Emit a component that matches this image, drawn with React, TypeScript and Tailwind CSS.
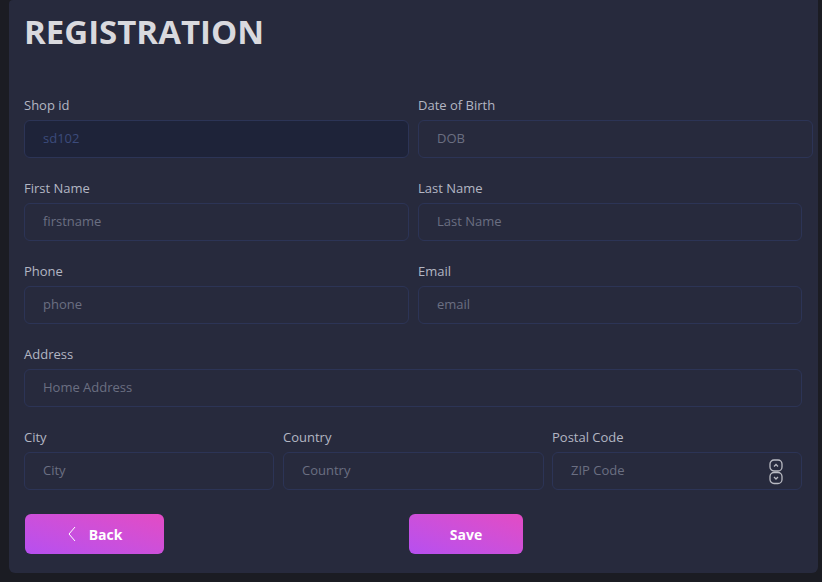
import React from "react";

const font = { fontFamily: '"Open Sans", "Liberation Sans", sans-serif' };

function Field({
  label,
  placeholder,
  width,
  value,
  muted,
  spinner,
}: {
  label: string;
  placeholder: string;
  width: string;
  value?: string;
  muted?: boolean;
  spinner?: boolean;
}) {
  return (
    <div className={`flex flex-col shrink-0 ${width}`}>
      <label className="text-[13px] leading-5 text-[#b3b6c3] mb-[5px]">{label}</label>
      <div
        className={`relative flex items-center h-[38px] rounded-md border border-[#2c3456] pl-[18px] pr-3 ${
          muted ? "bg-[#1e2339]" : "bg-transparent"
        }`}
      >
        <span className={`text-[13px] ${muted ? "text-[#3c4b7c]" : "text-[#6b6f82]"}`}>
          {value ?? placeholder}
        </span>
        {spinner && (
          <svg
            className="absolute right-[18px] top-[6px]"
            width="14"
            height="26"
            viewBox="0 0 14 26"
            fill="none"
            stroke="#b9bac2"
            strokeWidth="1.3"
          >
            <rect x="1" y="1" width="12" height="11" rx="4" />
            <rect x="1" y="13.5" width="12" height="11" rx="4" />
            <path d="M5 7.5 L7 5.5 L9 7.5" />
            <path d="M5 18 L7 20 L9 18" />
          </svg>
        )}
      </div>
    </div>
  );
}

export default function App() {
  return (
    <div className="w-[822px] h-[582px] bg-[#1b1c23] overflow-hidden" style={font}>
      <div className="ml-[9px] w-[809px] h-[573px] bg-[#272a3d] rounded-b-md rounded-tl-sm pl-[15px]">
        <h1 className="pt-[11px] text-[33px] leading-[42px] font-bold text-[#d9d9de]">
          REGISTRATION
        </h1>
        <div className="mt-[42px] w-[778px] flex flex-col gap-[20px]">
          <div className="flex gap-[9px]">
            <Field label="Shop id" placeholder="" value="sd102" muted width="w-[385px]" />
            <Field label="Date of Birth" placeholder="DOB" width="w-[395px]" />
          </div>
          <div className="flex gap-[9px]">
            <Field label="First Name" placeholder="firstname" width="w-[385px]" />
            <Field label="Last Name" placeholder="Last Name" width="w-[384px]" />
          </div>
          <div className="flex gap-[9px]">
            <Field label="Phone" placeholder="phone" width="w-[385px]" />
            <Field label="Email" placeholder="email" width="w-[384px]" />
          </div>
          <div className="flex">
            <Field label="Address" placeholder="Home Address" width="w-[778px]" />
          </div>
          <div className="flex">
            <Field label="City" placeholder="City" width="w-[250px]" />
            <div className="w-[9px]" />
            <Field label="Country" placeholder="Country" width="w-[261px]" />
            <div className="w-[8px]" />
            <Field label="Postal Code" placeholder="ZIP Code" width="w-[250px]" spinner />
          </div>
        </div>
        <div className="mt-[24px] flex items-center">
          <button className="ml-[1px] w-[139px] h-[40px] rounded-md bg-gradient-to-tr from-[#b64ff0] to-[#e34bc4] flex items-center justify-center gap-[12px] text-white text-[14px] font-bold">
            <svg width="10" height="16" viewBox="0 0 10 16" fill="none" stroke="#ffffff" strokeWidth="1">
              <path d="M8 1 L2 8 L8 15" />
            </svg>
            <span>Back</span>
          </button>
          <button className="ml-[245px] w-[114px] h-[40px] rounded-md bg-gradient-to-tr from-[#b64ff0] to-[#e34bc4] text-white text-[14px] font-bold">
            Save
          </button>
        </div>
      </div>
    </div>
  );
}
